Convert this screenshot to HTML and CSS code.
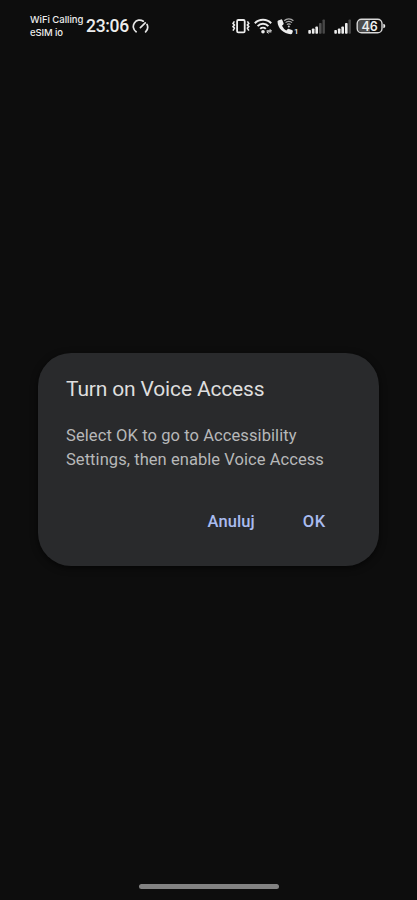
FILE: index.html
```html
<!DOCTYPE html>
<html lang="en">
<head>
<meta charset="utf-8">
<title>Voice Access</title>
<link rel="stylesheet" href="styles.css">
</head>
<body>
<div class="screen">
  <header class="status">
    <div class="carrier"><span class="wifi-calling">WiFi Calling</span><span class="esim">eSIM io</span></div>
    <span class="clock">23:06</span>
    <svg class="gauge" width="18" height="20" viewBox="0 0 18 20" fill="none" stroke="#e6e6e6" stroke-width="1.7" stroke-linecap="round">
      <path d="M4.1 15.8A6.4 6.4 0 0 1 11.3 5.2M15 8.4A6.4 6.4 0 0 1 13.6 15.8M8.4 11.6L13.2 6.8"/>
    </svg>
    <div class="icons">
      <svg class="vibrate" width="18" height="20" viewBox="0 0 18 20" fill="none" stroke="#ececec" stroke-width="1.6">
        <rect x="5.1" y="4" width="7.6" height="12.4" rx="1.2" stroke-width="1.8"/>
        <path d="M2.4 5.4L1 7.4L2.4 9L1 10.6L2.4 12.2L1 14.6M15.4 5.4L16.8 7.4L15.4 9L16.8 10.6L15.4 12.2L16.8 14.6"/>
      </svg>
      <svg class="wifi" width="19" height="20" viewBox="0 0 19 20" fill="none" stroke="#ececec" stroke-width="2">
        <path d="M.8 7.2A11.5 11.5 0 0 1 17.2 7.2M3.6 10.1A7.6 7.6 0 0 1 14.4 10.1M6.2 12.9A4 4 0 0 1 11.8 12.9"/>
        <circle cx="9" cy="15.8" r="1.8" fill="#ececec" stroke="none"/>
        <path d="M12.6 14.8H17.4L15.8 13.2M17.4 15.9H12.8L14.4 17.5" stroke-width="1"/>
      </svg>
      <svg class="call" width="23" height="20" viewBox="0 0 23 20" fill="none" stroke="#ececec">
        <path fill="#ececec" stroke="none" d="M1.2 4.4L4 3.4Q5 3.2 5.4 4.2L6.6 7.3Q6.9 8.2 6.1 8.8L5 9.7Q6.5 12.9 9.3 14.4L10.5 13.2Q11.1 12.6 12 12.9L15 13.9Q16.2 14.4 15.8 15.5L15.1 17.4Q14.7 18.3 13.7 18.2C6.7 18 .6 12.3.5 5.6Q.5 4.7 1.2 4.4Z"/>
        <path d="M7.2 4.7A6.6 6.6 0 0 1 16.4 4.7M8.6 6.7A4.4 4.4 0 0 1 15 6.7M10 8.7A2.4 2.4 0 0 1 13.6 8.7" stroke="#aaa" stroke-width="1.2"/>
        <circle cx="11.8" cy="10.5" r="1" fill="#ccc" stroke="none"/>
        <text x="17" y="17.6" class="sim-number">1</text>
      </svg>
      <svg class="signal-one" width="18" height="20" viewBox="0 0 18 20" fill="#ececec">
        <rect x=".3" y="14" width="2.6" height="3.8" rx=".8"/><rect x="3.9" y="12.5" width="2.6" height="5.3" rx=".8"/><rect x="7.4" y="10.5" width="2.6" height="7.3" rx=".8"/>
        <rect x="11" y="7" width="2.6" height="10.8" rx=".8" fill="#505050"/><rect x="14.5" y="3.5" width="2.4" height="14.3" rx=".8" fill="#484848"/>
      </svg>
      <svg class="signal-two" width="18" height="20" viewBox="0 0 18 20" fill="#ececec">
        <rect x=".3" y="14" width="2.6" height="3.8" rx=".8"/><rect x="3.9" y="12.5" width="2.6" height="5.3" rx=".8"/><rect x="7.4" y="10.5" width="2.6" height="7.3" rx=".8"/><rect x="11" y="7" width="2.6" height="10.8" rx=".8"/>
        <rect x="14.5" y="3.5" width="2.4" height="14.3" rx=".8" fill="#484848"/>
      </svg>
      <svg class="battery" width="30" height="20" viewBox="0 0 30 20">
        <path d="M14 4H5.5Q2 4 2 7.5V12.5Q2 16 5.5 16H14Z" fill="#4c4c4c"/>
        <rect x="1.2" y="3.2" width="24.8" height="13.6" rx="4.4" fill="none" stroke="#d8d8d8" stroke-width="1.4"/>
        <path d="M27.3 7.7Q29.3 8 29.3 10T27.3 12.3Z" fill="#ececec"/>
        <text x="13.7" y="14.6" text-anchor="middle" class="charge">46</text>
      </svg>
    </div>
  </header>
  <main class="stage">
    <section class="dialog">
      <h1 class="title">Turn on Voice Access</h1>
      <p class="message"><span class="line-one">Select OK to go to Accessibility</span><br>Settings, then enable Voice Access</p>
      <div class="actions"><button class="cancel">Anuluj</button><button class="ok">OK</button></div>
    </section>
  </main>
  <footer class="nav"><div class="handle"></div></footer>
</div>
</body>
</html>
```
FILE: styles.css
```css
* { box-sizing: border-box; }
body { margin: 0; background: #0d0d0d; font-family: Roboto, "Liberation Sans", sans-serif; }
.screen { width: 417px; height: 900px; display: flex; flex-direction: column; background: #0d0d0d; overflow: hidden; }
.status { height: 52px; padding-left: 30px; display: flex; align-items: center; color: #ececec; flex: none; white-space: nowrap; }
.carrier { width: 56px; display: flex; flex-direction: column; font: 500 9.5px/13px Inter, sans-serif; }
.wifi-calling { letter-spacing: -0.02px; }
.esim { letter-spacing: -0.1px; }
.clock { width: 46px; font: 500 17.5px/20px Roboto, sans-serif; letter-spacing: -0.3px; }
.gauge { flex: none; }
.icons { display: flex; margin-left: 82px; }
.icons svg { flex: none; display: block; }
.wifi { margin-left: 4px; }
.call { margin-left: 4px; }
.signal-one { margin-left: 8px; }
.signal-two { margin-left: 8px; }
.battery { margin-left: 4px; }
.sim-number { font: 500 8px Roboto, sans-serif; fill: #ececec; stroke: none; }
.charge { font: 600 12.5px Inter, sans-serif; fill: #ececec; }
.stage { flex: 1; padding: 301px 38px 0; }
.dialog { height: 213px; padding: 22px 28px 0; border-radius: 33px; background: #292a2c; box-shadow: 0 2px 7px #0009; }
.title { margin: 0; font-size: 21px; line-height: 28px; font-weight: 400; letter-spacing: -0.16px; color: #dedede; white-space: nowrap; }
.message { margin: 21px 0 0; font-size: 16.5px; line-height: 24px; letter-spacing: 0.06px; color: #b7b8b9; white-space: nowrap; }
.line-one { letter-spacing: 0.09px; }
.actions { display: flex; justify-content: flex-end; gap: 48px; margin: 38px 25px 0 0; }
.actions button { padding: 0; border: 0; background: none; color: #a9bcf0; font: 500 16.5px/24px Roboto, sans-serif; }
.cancel { letter-spacing: 0.1px; }
.actions .ok { letter-spacing: 0.7px; }
.nav { height: 18px; display: flex; justify-content: center; flex: none; }
.handle { width: 140px; height: 5px; margin-top: 2px; border-radius: 3px; background: #828282; }
```
